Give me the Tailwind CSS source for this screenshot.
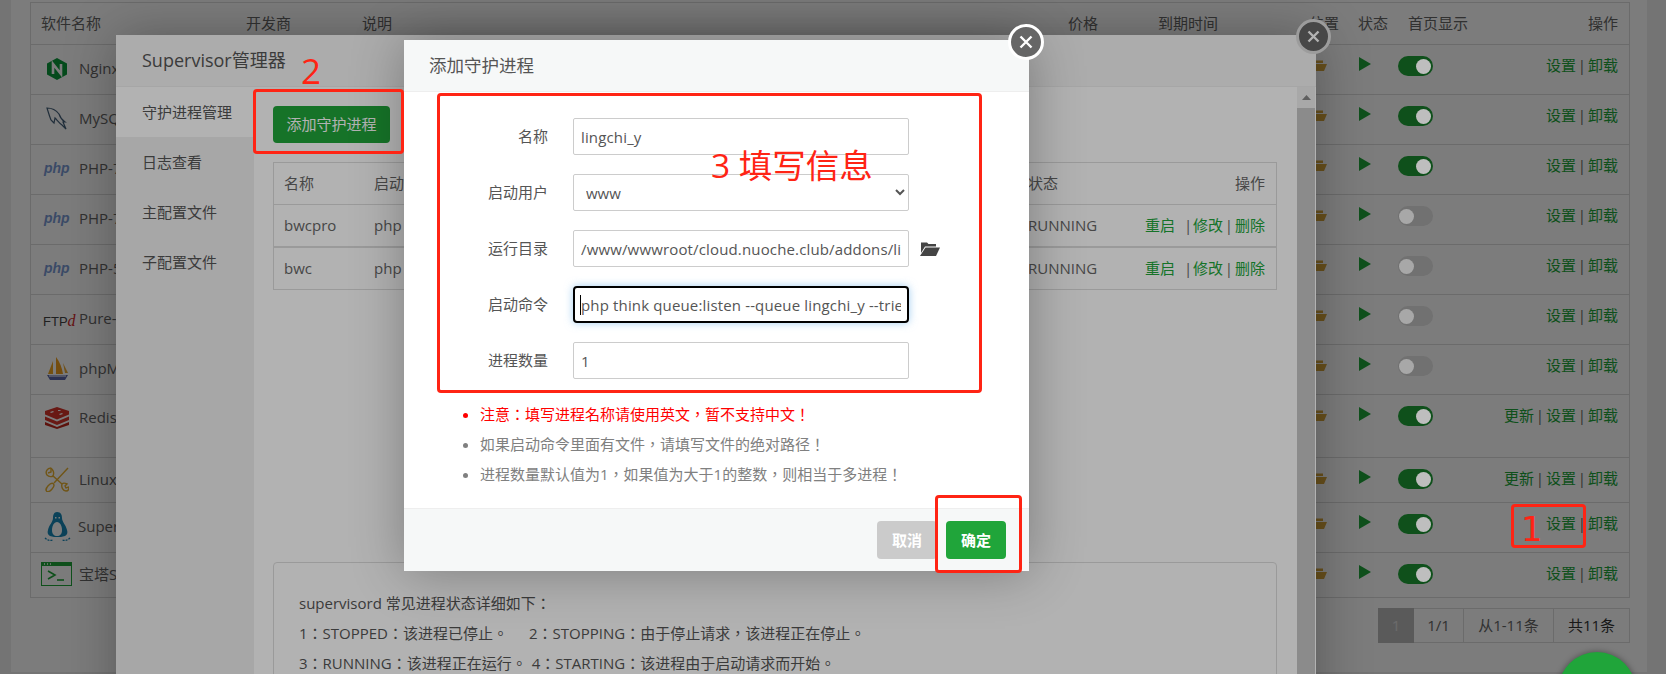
<!DOCTYPE html>
<html lang="zh-CN">
<head>
<meta charset="UTF-8">
<title>添加守护进程</title>
<script src="https://cdn.jsdelivr.net/npm/@tailwindcss/browser@4"></script>
</head>
<body>
<div class="relative w-[1666px] h-[674px] overflow-hidden bg-[#eeeeee] font-['Open_Sans','Noto_Sans_CJK_SC',sans-serif] text-[15px] text-[#666]">

  <!-- software list page -->
  <div class="ml-[11px] w-[1636px] h-[672px] bg-white pt-[2px] pl-[19px]">
    <div class="w-[1600px] border border-[#ddd]">
      <div class="grid grid-cols-[205px_116px_706px_90px_151px_49px_50px_100px_1fr] h-[42px] items-center border-b border-[#ddd] pl-[10px] pr-[11px] pb-[2px] leading-5">
        <div>软件名称</div><div>开发商</div><div>说明</div><div>价格</div><div>到期时间</div><div>位置</div><div>状态</div><div>首页显示</div><div class="text-right">操作</div>
      </div>

      <!-- nginx -->
      <div class="flex h-[50px] border-b border-[#ddd]">
        <div class="w-[1268px] h-full flex items-center pl-[15px] pb-[2px]">
          <svg class="w-[22px] h-[24px] mr-[11px]" viewBox="0 0 22 24"><polygon points="11,1 21,6.500 21,17.500 11,23 1,17.500 1,6.500" fill="#0c9a3c"/><path d="M7 17V7l8 10V7" fill="none" stroke="#fff" stroke-width="2.600"/></svg>
          <span>Nginx</span>
        </div>
        <div class="w-[49px] pt-[12px] pl-[10px]"><svg class="w-[18px] h-[14px]" viewBox="0 0 18 14"><path d="M1 2h5l1 1.500h7V6H4L1 12zM4 7h14l-3 7H0z" fill="#d9a63c"/></svg></div>
        <div class="w-[50px] pt-[12px] pl-[11px]"><svg class="w-[12px] h-[14px]" viewBox="0 0 12 14"><polygon points="0,0 12,7 0,14" fill="#20a53a"/></svg></div>
        <div class="flex-1 pt-[11px]"><div class="w-[35px] h-[20px] rounded-full bg-[#20a53a] flex justify-end items-center px-[2px]"><div class="relative z-[1] w-[15px] h-[15px] rounded-full bg-[#bebebe]"></div></div></div>
        <div class="pt-[10px] pr-[11px] leading-5 text-[#20a53a]">设置<span class="inline-block w-[12px] text-center text-[#666]">|</span>卸载</div>
      </div>

      <!-- mysql -->
      <div class="flex h-[50px] border-b border-[#ddd]">
        <div class="w-[1268px] h-full flex items-center pl-[15px] pb-[2px]">
          <svg class="w-[22px] h-[24px] mr-[11px]" viewBox="0 0 22 24"><path d="M1 1c4 0 9 2 12 6 1 3 3 6 6 8h-2l3 7-4-4c-3-2-5-5-7-7l-1 5-1-1-2-2C3 8 2 4 1 1z" fill="none" stroke="#46617a" stroke-width="1.200"/></svg>
          <span>MySQL</span>
        </div>
        <div class="w-[49px] pt-[12px] pl-[10px]"><svg class="w-[18px] h-[14px]" viewBox="0 0 18 14"><path d="M1 2h5l1 1.500h7V6H4L1 12zM4 7h14l-3 7H0z" fill="#d9a63c"/></svg></div>
        <div class="w-[50px] pt-[12px] pl-[11px]"><svg class="w-[12px] h-[14px]" viewBox="0 0 12 14"><polygon points="0,0 12,7 0,14" fill="#20a53a"/></svg></div>
        <div class="flex-1 pt-[11px]"><div class="w-[35px] h-[20px] rounded-full bg-[#20a53a] flex justify-end items-center px-[2px]"><div class="relative z-[1] w-[15px] h-[15px] rounded-full bg-[#bebebe]"></div></div></div>
        <div class="pt-[10px] pr-[11px] leading-5 text-[#20a53a]">设置<span class="inline-block w-[12px] text-center text-[#666]">|</span>卸载</div>
      </div>

      <!-- php x3 -->
      <div class="flex h-[50px] border-b border-[#ddd]">
        <div class="w-[1268px] h-full flex items-center pl-[13px] pb-[2px]">
          <span class="w-[35px] font-['Liberation_Sans',sans-serif] font-bold italic text-[14px] text-[#7a9ad4]">php</span>
          <span>PHP-7.0</span>
        </div>
        <div class="w-[49px] pt-[12px] pl-[10px]"><svg class="w-[18px] h-[14px]" viewBox="0 0 18 14"><path d="M1 2h5l1 1.500h7V6H4L1 12zM4 7h14l-3 7H0z" fill="#d9a63c"/></svg></div>
        <div class="w-[50px] pt-[12px] pl-[11px]"><svg class="w-[12px] h-[14px]" viewBox="0 0 12 14"><polygon points="0,0 12,7 0,14" fill="#20a53a"/></svg></div>
        <div class="flex-1 pt-[11px]"><div class="w-[35px] h-[20px] rounded-full bg-[#20a53a] flex justify-end items-center px-[2px]"><div class="relative z-[1] w-[15px] h-[15px] rounded-full bg-[#bebebe]"></div></div></div>
        <div class="pt-[10px] pr-[11px] leading-5 text-[#20a53a]">设置<span class="inline-block w-[12px] text-center text-[#666]">|</span>卸载</div>
      </div>
      <div class="flex h-[50px] border-b border-[#ddd]">
        <div class="w-[1268px] h-full flex items-center pl-[13px] pb-[2px]">
          <span class="w-[35px] font-['Liberation_Sans',sans-serif] font-bold italic text-[14px] text-[#7a9ad4]">php</span>
          <span>PHP-7.1</span>
        </div>
        <div class="w-[49px] pt-[12px] pl-[10px]"><svg class="w-[18px] h-[14px]" viewBox="0 0 18 14"><path d="M1 2h5l1 1.500h7V6H4L1 12zM4 7h14l-3 7H0z" fill="#d9a63c"/></svg></div>
        <div class="w-[50px] pt-[12px] pl-[11px]"><svg class="w-[12px] h-[14px]" viewBox="0 0 12 14"><polygon points="0,0 12,7 0,14" fill="#20a53a"/></svg></div>
        <div class="flex-1 pt-[11px]"><div class="w-[35px] h-[20px] rounded-full bg-[#e8e8e8] flex items-center px-[1px]"><div class="relative z-[1] w-[15px] h-[15px] rounded-full bg-[#a8a8a8]"></div></div></div>
        <div class="pt-[10px] pr-[11px] leading-5 text-[#20a53a]">设置<span class="inline-block w-[12px] text-center text-[#666]">|</span>卸载</div>
      </div>
      <div class="flex h-[50px] border-b border-[#ddd]">
        <div class="w-[1268px] h-full flex items-center pl-[13px] pb-[2px]">
          <span class="w-[35px] font-['Liberation_Sans',sans-serif] font-bold italic text-[14px] text-[#7a9ad4]">php</span>
          <span>PHP-5.6</span>
        </div>
        <div class="w-[49px] pt-[12px] pl-[10px]"><svg class="w-[18px] h-[14px]" viewBox="0 0 18 14"><path d="M1 2h5l1 1.500h7V6H4L1 12zM4 7h14l-3 7H0z" fill="#d9a63c"/></svg></div>
        <div class="w-[50px] pt-[12px] pl-[11px]"><svg class="w-[12px] h-[14px]" viewBox="0 0 12 14"><polygon points="0,0 12,7 0,14" fill="#20a53a"/></svg></div>
        <div class="flex-1 pt-[11px]"><div class="w-[35px] h-[20px] rounded-full bg-[#e8e8e8] flex items-center px-[1px]"><div class="relative z-[1] w-[15px] h-[15px] rounded-full bg-[#a8a8a8]"></div></div></div>
        <div class="pt-[10px] pr-[11px] leading-5 text-[#20a53a]">设置<span class="inline-block w-[12px] text-center text-[#666]">|</span>卸载</div>
      </div>

      <!-- pure-ftpd -->
      <div class="flex h-[50px] border-b border-[#ddd]">
        <div class="w-[1268px] h-full flex items-center pl-[12px] pb-[2px]">
          <span class="w-[36px] font-['Liberation_Sans',sans-serif] text-[13px] text-[#444] mt-[4px]">FTP<i class="font-['Liberation_Serif',serif] text-[16px] text-[#d0282a]">d</i></span>
          <span>Pure-Ftpd</span>
        </div>
        <div class="w-[49px] pt-[12px] pl-[10px]"><svg class="w-[18px] h-[14px]" viewBox="0 0 18 14"><path d="M1 2h5l1 1.500h7V6H4L1 12zM4 7h14l-3 7H0z" fill="#d9a63c"/></svg></div>
        <div class="w-[50px] pt-[12px] pl-[11px]"><svg class="w-[12px] h-[14px]" viewBox="0 0 12 14"><polygon points="0,0 12,7 0,14" fill="#20a53a"/></svg></div>
        <div class="flex-1 pt-[11px]"><div class="w-[35px] h-[20px] rounded-full bg-[#e8e8e8] flex items-center px-[1px]"><div class="relative z-[1] w-[15px] h-[15px] rounded-full bg-[#a8a8a8]"></div></div></div>
        <div class="pt-[10px] pr-[11px] leading-5 text-[#20a53a]">设置<span class="inline-block w-[12px] text-center text-[#666]">|</span>卸载</div>
      </div>

      <!-- phpmyadmin -->
      <div class="flex h-[50px] border-b border-[#ddd]">
        <div class="w-[1268px] h-full flex items-center pl-[15px] pb-[2px]">
          <svg class="w-[23px] h-[25px] mr-[10px]" viewBox="0 0 23 25"><path d="M7 5L2 18h5z" fill="#f0a828"/><path d="M10 1l0 17h7C16 12 14 6 10 1z" fill="#f0a020"/><path d="M17 7l5 10h-3z" fill="#e8a838"/><path d="M1 19h21l-3 5H4z" fill="#5c68a8"/><path d="M3 20h17" stroke="#fff"/></svg>
          <span>phpMyAdmin</span>
        </div>
        <div class="w-[49px] pt-[12px] pl-[10px]"><svg class="w-[18px] h-[14px]" viewBox="0 0 18 14"><path d="M1 2h5l1 1.500h7V6H4L1 12zM4 7h14l-3 7H0z" fill="#d9a63c"/></svg></div>
        <div class="w-[50px] pt-[12px] pl-[11px]"><svg class="w-[12px] h-[14px]" viewBox="0 0 12 14"><polygon points="0,0 12,7 0,14" fill="#20a53a"/></svg></div>
        <div class="flex-1 pt-[11px]"><div class="w-[35px] h-[20px] rounded-full bg-[#e8e8e8] flex items-center px-[1px]"><div class="relative z-[1] w-[15px] h-[15px] rounded-full bg-[#a8a8a8]"></div></div></div>
        <div class="pt-[10px] pr-[11px] leading-5 text-[#20a53a]">设置<span class="inline-block w-[12px] text-center text-[#666]">|</span>卸载</div>
      </div>

      <!-- redis -->
      <div class="flex h-[63px] border-b border-[#ddd]">
        <div class="w-[1268px] flex items-start pl-[14px] pt-[12px] leading-5">
          <svg class="w-[24px] h-[22px] mr-[10px]" viewBox="0 0 24 22"><path d="M0 15l12 5 12-5v3l-12 4-12-4z" fill="#c0281c"/><path d="M0 9.500l12 5 12-5v3.500l-12 5-12-5z" fill="#d8352c"/><path d="M0 4l12-4 12 4v3.500l-12 5-12-5z" fill="#d8352c"/><path d="M5 5l3-1 1 1-3 1zM13 3h3l-1 1h-2zM14 7l3-1 1 1-3 1z" fill="#fff"/></svg>
          <span>Redis 5.0</span>
        </div>
        <div class="w-[49px] pt-[12px] pl-[10px]"><svg class="w-[18px] h-[14px]" viewBox="0 0 18 14"><path d="M1 2h5l1 1.500h7V6H4L1 12zM4 7h14l-3 7H0z" fill="#d9a63c"/></svg></div>
        <div class="w-[50px] pt-[12px] pl-[11px]"><svg class="w-[12px] h-[14px]" viewBox="0 0 12 14"><polygon points="0,0 12,7 0,14" fill="#20a53a"/></svg></div>
        <div class="flex-1 pt-[11px]"><div class="w-[35px] h-[20px] rounded-full bg-[#20a53a] flex justify-end items-center px-[2px]"><div class="relative z-[1] w-[15px] h-[15px] rounded-full bg-[#bebebe]"></div></div></div>
        <div class="pt-[10px] pr-[11px] leading-5 text-[#20a53a]">更新<span class="inline-block w-[12px] text-center text-[#666]">|</span>设置<span class="inline-block w-[12px] text-center text-[#666]">|</span>卸载</div>
      </div>

      <!-- linux tools -->
      <div class="flex h-[45px] border-b border-[#ddd]">
        <div class="w-[1268px] h-full flex items-center pl-[14px] pb-[2px]">
          <svg class="w-[24px] h-[25px] mr-[10px]" viewBox="0 0 24 25"><g fill="none" stroke="#e8b030" stroke-width="1.400"><path d="M23 1L9 16"/><ellipse cx="5" cy="20.500" rx="2.500" ry="5" transform="rotate(42 5 20.500)"/><path d="M6 1C2 1 0 5 2 8c2 2 5 2 6 1l9 8"/><path d="M6 1v4L3 6"/><path d="M8 9c1-2 1-5-2-8"/><path d="M17 17c-1 3 1 7 4 7 2 0 3-2 3-4l-3 1-1-2 2-2c-2-1-4-1-5 0z"/></g></svg>
          <span>Linux工具箱</span>
        </div>
        <div class="w-[49px] pt-[12px] pl-[10px]"><svg class="w-[18px] h-[14px]" viewBox="0 0 18 14"><path d="M1 2h5l1 1.500h7V6H4L1 12zM4 7h14l-3 7H0z" fill="#d9a63c"/></svg></div>
        <div class="w-[50px] pt-[12px] pl-[11px]"><svg class="w-[12px] h-[14px]" viewBox="0 0 12 14"><polygon points="0,0 12,7 0,14" fill="#20a53a"/></svg></div>
        <div class="flex-1 pt-[11px]"><div class="w-[35px] h-[20px] rounded-full bg-[#20a53a] flex justify-end items-center px-[2px]"><div class="relative z-[1] w-[15px] h-[15px] rounded-full bg-[#bebebe]"></div></div></div>
        <div class="pt-[10px] pr-[11px] leading-5 text-[#20a53a]">更新<span class="inline-block w-[12px] text-center text-[#666]">|</span>设置<span class="inline-block w-[12px] text-center text-[#666]">|</span>卸载</div>
      </div>

      <!-- supervisor -->
      <div class="flex h-[50px] border-b border-[#ddd]">
        <div class="w-[1268px] h-full flex items-center pl-[13px] pb-[2px]">
          <svg class="w-[27px] h-[30px] mr-[7px]" viewBox="0 0 27 30"><path d="M13 0c4 0 5 3 5 6 0 4 4 7 5 12 1 3 0 5-2 6l-4 1H10l-4-1c-2-1-3-3-2-6 1-5 5-8 5-12 0-3 1-6 4-6z" fill="#1788b8"/><path d="M13 10c3 0 5 4 5 8s-2 6-5 6-5-2-5-6 2-8 5-8z" fill="#fff"/><path d="M1 26c2 2 5 3 8 2M26 26c-2 2-5 3-8 2" fill="none" stroke="#1788b8" stroke-width="1.200" stroke-dasharray="2 1"/><path d="M11 5h1.500v1.500H11zM14.500 5H16v1.500h-1.500z" fill="#fff"/></svg>
          <span>Supervisor管理器</span>
        </div>
        <div class="w-[49px] pt-[12px] pl-[10px]"><svg class="w-[18px] h-[14px]" viewBox="0 0 18 14"><path d="M1 2h5l1 1.500h7V6H4L1 12zM4 7h14l-3 7H0z" fill="#d9a63c"/></svg></div>
        <div class="w-[50px] pt-[12px] pl-[11px]"><svg class="w-[12px] h-[14px]" viewBox="0 0 12 14"><polygon points="0,0 12,7 0,14" fill="#20a53a"/></svg></div>
        <div class="flex-1 pt-[11px]"><div class="w-[35px] h-[20px] rounded-full bg-[#20a53a] flex justify-end items-center px-[2px]"><div class="relative z-[1] w-[15px] h-[15px] rounded-full bg-[#bebebe]"></div></div></div>
        <div class="pt-[10px] pr-[11px] leading-5 text-[#20a53a]">设置<span class="inline-block w-[12px] text-center text-[#666]">|</span>卸载</div>
      </div>

      <!-- bt ssh -->
      <div class="flex h-[44px]">
        <div class="w-[1268px] h-full flex items-center pl-[10px] pb-[2px]">
          <svg class="w-[31px] h-[24px] mr-[7px]" viewBox="0 0 31 24"><rect x="0.500" y="0.500" width="30" height="23" fill="#fff" stroke="#20a53a"/><rect x="0" y="0" width="31" height="4" fill="#20a53a"/><path d="M3 2h1M6 2h1M9 2h1" stroke="#fff" stroke-width="1.400"/><path d="M7 9l7 4-7 4" fill="none" stroke="#20a53a" stroke-width="1.600"/><path d="M16 18h7" stroke="#20a53a" stroke-width="1.600"/></svg>
          <span>宝塔SSH终端</span>
        </div>
        <div class="w-[49px] pt-[12px] pl-[10px]"><svg class="w-[18px] h-[14px]" viewBox="0 0 18 14"><path d="M1 2h5l1 1.500h7V6H4L1 12zM4 7h14l-3 7H0z" fill="#d9a63c"/></svg></div>
        <div class="w-[50px] pt-[12px] pl-[11px]"><svg class="w-[12px] h-[14px]" viewBox="0 0 12 14"><polygon points="0,0 12,7 0,14" fill="#20a53a"/></svg></div>
        <div class="flex-1 pt-[11px]"><div class="w-[35px] h-[20px] rounded-full bg-[#20a53a] flex justify-end items-center px-[2px]"><div class="relative z-[1] w-[15px] h-[15px] rounded-full bg-[#bebebe]"></div></div></div>
        <div class="pt-[10px] pr-[11px] leading-5 text-[#20a53a]">设置<span class="inline-block w-[12px] text-center text-[#666]">|</span>卸载</div>
      </div>
    </div>

    <!-- pagination -->
    <div class="flex justify-end mt-[10px] h-[35px] w-[1600px]">
      <div class="w-[36px] flex items-center justify-center bg-[#bbbbbb] text-[#ddd]">1</div>
      <div class="w-[50px] flex items-center justify-center border border-l-0 border-[#ddd]">1/1</div>
      <div class="w-[90px] flex items-center justify-center border border-l-0 border-[#ddd]">从1-11条</div>
      <div class="w-[76px] flex items-center justify-center border border-l-0 border-[#ddd] text-[#333]">共11条</div>
    </div>
  </div>

  <!-- first overlay + Supervisor modal -->
  <div class="absolute inset-0 bg-black/30"></div>
  <div class="absolute left-[116px] top-[35px] w-[1200px] h-[700px] bg-white shadow-[1px_1px_50px_rgba(0,0,0,0.3)] flex flex-col text-[#555]">
    <div class="h-[52px] shrink-0 flex items-center pl-[26px] bg-[#f6f6f6] border-b border-[#eee] text-[18px]">Supervisor管理器</div>
    <div class="flex flex-1">
      <div class="w-[138px] shrink-0 bg-[#f0f0f0]">
        <div class="h-[50px] flex items-center pl-[26px] bg-white">守护进程管理</div>
        <div class="h-[50px] flex items-center pl-[26px]">日志查看</div>
        <div class="h-[50px] flex items-center pl-[26px]">主配置文件</div>
        <div class="h-[50px] flex items-center pl-[26px]">子配置文件</div>
      </div>
      <div class="flex-1 pt-[19px] pl-[19px] pr-[20px]">
        <div class="w-[117px] h-[37px] rounded-[4px] bg-[#20a53a] text-white flex items-center justify-center">添加守护进程</div>
        <div class="mt-[19px] border border-[#ddd] text-[#666]">
          <div class="grid grid-cols-[90px_654px_1fr_auto] h-[42px] items-center border-b border-[#ddd] pl-[10px] pr-[11px]">
            <div>名称</div><div>启动命令</div><div>状态</div><div>操作</div>
          </div>
          <div class="grid grid-cols-[90px_654px_1fr_auto] h-[43px] items-center border-b-2 border-[#ddd] pl-[10px] pr-[11px]">
            <div>bwcpro</div><div>php think queue:listen</div><div>RUNNING</div><div class="text-[#20a53a]">重启<span class="inline-block w-[18px] pl-[9px] text-[#666]">|</span>修改<span class="inline-block w-[12px] text-center text-[#666]">|</span>删除</div>
          </div>
          <div class="grid grid-cols-[90px_654px_1fr_auto] h-[41px] items-center pl-[10px] pr-[11px]">
            <div>bwc</div><div>php think queue:listen</div><div>RUNNING</div><div class="text-[#20a53a]">重启<span class="inline-block w-[18px] pl-[9px] text-[#666]">|</span>修改<span class="inline-block w-[12px] text-center text-[#666]">|</span>删除</div>
          </div>
        </div>
        <div lang="zh-TW" class="mt-[272px] border border-[#ddd] rounded-[4px] pt-[25px] pl-[25px] h-[200px] text-[#555] font-['Open_Sans','Noto_Sans_CJK_TC',sans-serif]">
          <p class="h-[30px] leading-[30px]">supervisord 常见进程状态详细如下：</p>
          <p class="h-[30px] leading-[30px]">1：STOPPED：该进程已停止。<span class="ml-[21px]">2：STOPPING：由于停止请求，该进程正在停止。</span></p>
          <p class="h-[30px] leading-[30px]">3：RUNNING：该进程正在运行。<span class="ml-[5px]">4：STARTING：该进程由于启动请求而开始。</span></p>
        </div>
      </div>
      <div class="w-[19px] shrink-0 bg-[#f1f1f1] border-r border-white flex flex-col items-center">
        <div class="h-[21px] flex items-center justify-center"><svg class="w-[9px] h-[5px]" viewBox="0 0 9 5"><polygon points="4.500,0 9,5 0,5" fill="#888"/></svg></div>
        <div class="w-full flex-1 bg-[#c8c8c8]"></div>
      </div>
    </div>
    <div class="absolute -right-[15px] -top-[16px] w-[35px] h-[35px] rounded-full bg-[#666] border-[3px] border-white/80 flex items-center justify-center">
      <svg class="w-[13px] h-[13px]" viewBox="0 0 13 13"><path d="M1.500 1.500l10 10M11.500 1.500l-10 10" stroke="#fff" stroke-width="2.400"/></svg>
    </div>
  </div>

  <!-- second overlay + add form modal -->
  <div class="absolute inset-0 bg-black/30"></div>
  <div class="absolute left-[404px] top-[40px] w-[625px] h-[531px] bg-white shadow-[1px_1px_50px_rgba(0,0,0,0.3)] flex flex-col text-[#555]">
    <div class="h-[52px] shrink-0 flex items-center pl-[25px] bg-[#f6f8f8] border-b border-[#eee] text-[17.500px]">添加守护进程</div>
    <div class="pt-[26px] flex flex-col gap-[19px]">
      <div class="flex items-center h-[37px]">
        <label class="w-[144px] text-right mr-[25px]">名称</label>
        <input class="w-[336px] h-full border border-[#ccc] rounded-[2px] px-[7px] text-[#555] tracking-[0.15px] outline-none" value="lingchi_y">
      </div>
      <div class="flex items-center h-[37px]">
        <label class="w-[144px] text-right mr-[25px]">启动用户</label>
        <select class="w-[336px] h-full border border-[#ccc] rounded-[2px] px-[8px] text-[#555] bg-white outline-none"><option>www</option></select>
      </div>
      <div class="flex items-center h-[37px]">
        <label class="w-[144px] text-right mr-[25px]">运行目录</label>
        <input class="w-[336px] h-full border border-[#ccc] rounded-[2px] px-[7px] text-[#555] tracking-[0.15px] outline-none" value="/www/wwwroot/cloud.nuoche.club/addons/lingchi_y">
        <svg class="w-[20px] h-[15px] ml-[11px]" viewBox="0 0 20 15"><path d="M1 3V1.500h6L8.500 3H16v2.500H5L1 12z" fill="#444"/><path d="M5.500 6.500H20L16 15H0z" fill="#444"/></svg>
      </div>
      <div class="flex items-center h-[37px]">
        <label class="w-[144px] text-right mr-[25px]">启动命令</label>
        <div class="relative w-[336px] h-full">
          <input class="w-full h-full border-2 border-black rounded-[4px] px-[6px] text-[#555] tracking-[0.15px] outline-none shadow-[0_0_8px_rgba(102,175,233,0.6)]" value="php think queue:listen --queue lingchi_y --tries 3">
          <span class="absolute left-[7px] top-[9px] w-px h-[20px] bg-black"></span>
        </div>
      </div>
      <div class="flex items-center h-[37px]">
        <label class="w-[144px] text-right mr-[25px]">进程数量</label>
        <input class="w-[336px] h-full border border-[#ccc] rounded-[2px] px-[7px] text-[#555] outline-none" value="1">
      </div>
    </div>
    <ul lang="zh-TW" class="mt-[20px] pl-[76px] list-disc text-[#808080] font-['Open_Sans','Noto_Sans_CJK_TC',sans-serif]">
      <li class="h-[30px] leading-[30px] text-[#ff0000]">注意：填写进程名称请使用英文，暂不支持中文！</li>
      <li class="h-[30px] leading-[30px]">如果启动命令里面有文件，请填写文件的绝对路径！</li>
      <li class="h-[30px] leading-[30px]">进程数量默认值为1，如果值为大于1的整数，则相当于多进程！</li>
    </ul>
    <div class="mt-auto h-[63px] shrink-0 flex items-center justify-end gap-[9px] pr-[23px] bg-[#f6f8f8] border-t border-[#eee] font-bold text-white">
      <div class="w-[60px] h-[38px] rounded-[4px] bg-[#cbcbcb] flex items-center justify-center">取消</div>
      <div class="w-[60px] h-[38px] rounded-[4px] bg-[#20a53a] flex items-center justify-center">确定</div>
    </div>
    <div class="absolute -right-[15px] -top-[16px] w-[36px] h-[36px] rounded-full bg-[#666] border-[3px] border-white flex items-center justify-center">
      <svg class="w-[14px] h-[14px]" viewBox="0 0 14 14"><path d="M1.500 1.500l11 11M12.500 1.500l-11 11" stroke="#fff" stroke-width="2.400"/></svg>
    </div>
  </div>

  <!-- floating green button -->
  <div class="absolute left-[1558px] top-[652px] w-[78px] h-[78px] rounded-full bg-[#20a53a] shadow-[0_0_6px_rgba(0,0,0,0.4)]"></div>

  <!-- red annotations -->
  <div class="absolute left-[253px] top-[89px] w-[151px] h-[65px] border-[3px] border-[#ff2414] rounded-[4px]"></div>
  <div class="absolute left-[437px] top-[93px] w-[545px] h-[300px] border-[3px] border-[#ff2414] rounded-[4px]"></div>
  <div class="absolute left-[935px] top-[495px] w-[87px] h-[78px] border-[3px] border-[#ff2414] rounded-[4px]"></div>
  <div class="absolute left-[1511px] top-[504px] w-[75px] h-[44px] border-[3px] border-[#ff2414] rounded-[4px]"></div>
  <div class="absolute left-[301px] top-[47px] text-[35px] leading-[48px] text-[#ff2414]">2</div>
  <div class="absolute left-[711px] top-[143px] text-[33.500px] leading-[44px] text-[#ff2414] whitespace-nowrap">3 填写信息</div>
  <div class="absolute left-[1521px] top-[505px] font-['DejaVu_Sans',sans-serif] text-[34px] leading-[48px] text-[#ff2414]">1</div>
</div>
</body>
</html>
